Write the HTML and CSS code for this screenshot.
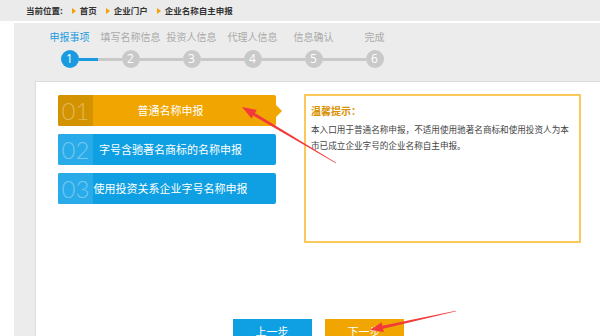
FILE: index.html
```html
<!DOCTYPE html>
<html lang="zh-CN">
<head>
    <meta charset="UTF-8">
    <title>企业名称自主申报</title>
    <link rel="stylesheet" href="styles.css">
</head>
<body>
    <div class="crumb">
        <span class="crumb-label">当前位置:</span>
        <span class="crumb-item">首页</span>
        <span class="crumb-item">企业门户</span>
        <span class="crumb-item">企业名称自主申报</span>
    </div>

    <div class="main">
        <div class="steps">
            <div class="step-labels">
                <span class="step-label active">申报事项</span>
                <span class="step-label">填写名称信息</span>
                <span class="step-label">投资人信息</span>
                <span class="step-label">代理人信息</span>
                <span class="step-label">信息确认</span>
                <span class="step-label">完成</span>
            </div>
            <div class="step-track">
                <span class="dot active">1</span>
                <span class="bar first"></span>
                <span class="dot">2</span>
                <span class="bar"></span>
                <span class="dot">3</span>
                <span class="bar"></span>
                <span class="dot">4</span>
                <span class="bar"></span>
                <span class="dot">5</span>
                <span class="bar"></span>
                <span class="dot">6</span>
            </div>
        </div>

        <div class="panel">
            <div class="panel-body">
                <div class="options">
                    <div class="option current">
                        <span class="num">01</span>
                        <span class="name">普通名称申报</span>
                    </div>
                    <div class="option">
                        <span class="num">02</span>
                        <span class="name">字号含驰著名商标的名称申报</span>
                    </div>
                    <div class="option">
                        <span class="num">03</span>
                        <span class="name">使用投资关系企业字号名称申报</span>
                    </div>
                </div>
                <div class="hint">
                    <div class="hint-title">温馨提示：</div>
                    <p class="hint-text">本入口用于普通名称申报，不适用使用驰著名商标和使用投资人为本市已成立企业字号的企业名称自主申报。</p>
                </div>
            </div>
            <div class="actions">
                <button class="btn prev">上一步</button>
                <button class="btn next">下一步</button>
            </div>
        </div>
    </div>

    <!-- red annotation arrows drawn over the screenshot -->
    <svg class="marks" width="600" height="336" viewBox="0 0 600 336">
        <polygon fill="#f23a3a" points="242,107 256.7,109.9 254.9,112.9 336.2,162.7 335.8,163.3 253.3,115.5 251.5,118.5"/>
        <polygon fill="#f23a3a" points="370,330 381.6,322.3 382.4,325.7 455.9,310.7 456.1,311.3 383,328.7 383.8,332.1"/>
    </svg>
</body>
</html>
```

FILE: styles.css
```css
body {
    margin: 0;
    width: 600px;
    height: 336px;
    overflow: hidden;
    position: relative;
    background-color: #fff;
    font-family: "Noto Sans CJK SC", "Noto Sans", sans-serif;
}
.crumb {
    height: 21px;
    line-height: 21px;
    padding-left: 26px;
    background-color: #ebebeb;
    font-size: 8.5px;
    font-weight: bold;
    color: #333;
    display: flex;
    align-items: center;
}
.crumb-item {
    display: flex;
    align-items: center;
    margin-left: 9px;
}
.crumb-item::before {
    content: "";
    border-left: 4px solid #f5a000;
    border-top: 3.5px solid transparent;
    border-bottom: 3.5px solid transparent;
    margin-right: 4px;
}
.main {
    margin-top: 2px;
    margin-left: 14px;
    padding-left: 21px;
    height: 313px;
    background-color: #ececec;
}
.steps {
    padding: 8px 0 13px 4px;
}
.step-labels {
    display: flex;
    line-height: 12px;
}
.step-label {
    width: 61px;
    text-align: center;
    font-size: 10px;
    color: #aaa;
}
.step-label.active {
    color: #1a9be0;
}
.step-track {
    display: flex;
    align-items: center;
    margin-top: 7px;
    padding-left: 21.5px;
}
.dot {
    width: 18px;
    height: 18px;
    border-radius: 50%;
    background-color: #c9c9c9;
    color: #fff;
    font-family: "Open Sans", sans-serif;
    font-size: 12px;
    line-height: 18px;
    text-align: center;
}
.dot.active {
    background-color: #1a9be0;
}
.bar {
    width: 43px;
    height: 3px;
    background-color: #c9c9c9;
}
.bar.first {
    background: linear-gradient(to right, #1a9be0 19px, #c9c9c9 19px);
}
.panel {
    height: 260px;
    background-color: #fff;
    border-top: 1px solid #dcdcdc;
    border-left: 1px solid #dcdcdc;
}
.panel-body {
    display: flex;
    align-items: flex-start;
    padding: 12px 0 0 22px;
}
.options {
    width: 218px;
    margin-top: 1px;
    margin-right: 28px;
    display: flex;
    flex-direction: column;
    gap: 8px;
}
.option {
    position: relative;
    display: flex;
    height: 31px;
    border-radius: 2px;
    background-color: #0fa0e3;
    color: #fff;
}
.option .num {
    width: 35px;
    border-radius: 2px 0 0 2px;
    background-color: #2aabe9;
    color: rgba(255, 255, 255, 0.35);
    font-family: "Lato", sans-serif;
    font-weight: 300;
    font-size: 24px;
    line-height: 31px;
    text-align: center;
}
.option .name {
    flex: 1;
    padding-right: 28px;
    text-align: center;
    font-size: 11px;
    line-height: 31px;
    white-space: nowrap;
}
.option.current {
    background-color: #f0a500;
}
.option.current .num {
    background-color: #d39300;
}
.option.current::after {
    content: "";
    position: absolute;
    right: -6px;
    top: 10px;
    border-left: 6px solid #f0a500;
    border-top: 6px solid transparent;
    border-bottom: 6px solid transparent;
}
.hint {
    box-sizing: border-box;
    width: 277px;
    height: 149px;
    padding: 8px 6px 0 5px;
    border: 2px solid #fbc85c;
}
.hint-title {
    font-size: 10px;
    font-weight: bold;
    color: #d99100;
    line-height: 14px;
}
.hint-text {
    margin: 3px 0 0;
    font-size: 8.6px;
    line-height: 16px;
    color: #444;
}
.actions {
    display: flex;
    justify-content: center;
    gap: 13px;
    margin-top: 76px;
}
.btn {
    width: 79px;
    height: 24px;
    border: none;
    padding: 0;
    color: #fff;
    font-family: "Noto Sans CJK SC", sans-serif;
    font-size: 11px;
    line-height: 24px;
}
.btn.prev {
    background-color: #0fa0e3;
}
.btn.next {
    background-color: #f0a500;
}
.marks {
    position: absolute;
    left: 0;
    top: 0;
    pointer-events: none;
}
```
